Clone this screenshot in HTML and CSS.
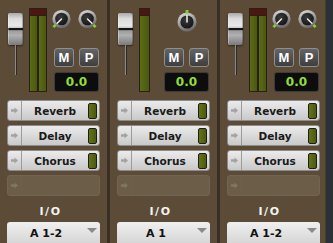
FILE: index.html
```html
<html lang="en">
<head>
  <meta charset="UTF-8" />
  <title>Mixer</title>
  <link rel="stylesheet" href="styles.css">
</head>
<body>
  <svg class="defs" width="0" height="0">
    <defs>
      <linearGradient id="ring" x1="0" y1="0" x2="0.4" y2="1">
        <stop offset="0" stop-color="#e2e2e2"/>
        <stop offset="1" stop-color="#6e6e6e"/>
      </linearGradient>
      <radialGradient id="hub" cx="0.4" cy="0.35" r="0.7">
        <stop offset="0" stop-color="#3a3a3a"/>
        <stop offset="1" stop-color="#141414"/>
      </radialGradient>
      <symbol id="knob" viewBox="0 0 24 24">
        <circle cx="12" cy="12" r="9.5" fill="url(#ring)"/>
        <circle cx="12" cy="12" r="6.6" fill="url(#hub)"/>
      </symbol>
      <symbol id="arrow" viewBox="0 0 9 8">
        <path d="M0 2.5h4.5V0L9 4 4.5 8V5.5H0z"/>
      </symbol>
    </defs>
  </svg>

  <div class="mixer">
    <!-- channel 1 -->
    <div class="strip">
      <div class="top">
        <div class="fader"><div class="cap"></div><div class="track"></div></div>
        <div class="meter-slot">
          <div class="meter"><div class="clip"></div><div class="bars"><span></span><span></span></div></div>
        </div>
        <div class="ctrl">
          <div class="knobs">
            <svg class="knob" width="24" height="24" viewBox="0 0 24 24">
              <use href="#knob"/>
              <g transform="rotate(-135 12 12)">
                <line x1="12" y1="12" x2="12" y2="5.6" class="ptr"/>
                <rect x="10.6" y="0" width="2.8" height="3.2" class="tick"/>
              </g>
            </svg>
            <svg class="knob" width="24" height="24" viewBox="0 0 24 24">
              <use href="#knob"/>
              <g transform="rotate(135 12 12)">
                <line x1="12" y1="12" x2="12" y2="5.6" class="ptr"/>
                <rect x="10.6" y="0" width="2.8" height="3.2" class="tick"/>
              </g>
            </svg>
          </div>
          <div class="mp"><span class="btn">M</span><span class="btn">P</span></div>
          <div class="display">0.0</div>
        </div>
      </div>
      <div class="sends">
        <div class="send"><span class="arrow"><svg width="7" height="7"><use href="#arrow"/></svg></span><span class="name">Reverb</span><span class="level"></span></div>
        <div class="send"><span class="arrow"><svg width="7" height="7"><use href="#arrow"/></svg></span><span class="name">Delay</span><span class="level"></span></div>
        <div class="send"><span class="arrow"><svg width="7" height="7"><use href="#arrow"/></svg></span><span class="name">Chorus</span><span class="level"></span></div>
        <div class="send empty"><span class="arrow"><svg width="7" height="7"><use href="#arrow"/></svg></span></div>
      </div>
      <div class="io-label">I/O</div>
      <div class="io"><span class="io-name">A 1-2</span><span class="tri"></span></div>
    </div>

    <!-- channel 2 -->
    <div class="strip">
      <div class="top">
        <div class="fader"><div class="cap"></div><div class="track"></div></div>
        <div class="meter-slot">
          <div class="meter mono"><div class="clip"></div><div class="bars"><span></span></div></div>
        </div>
        <div class="ctrl">
          <div class="knobs single">
            <svg class="knob" width="24" height="24" viewBox="0 0 24 24">
              <use href="#knob"/>
              <line x1="12" y1="12" x2="12" y2="5.6" class="ptr"/>
              <rect x="10.6" y="0" width="2.8" height="3.6" class="tick"/>
            </svg>
          </div>
          <div class="mp"><span class="btn">M</span><span class="btn">P</span></div>
          <div class="display">0.0</div>
        </div>
      </div>
      <div class="sends">
        <div class="send"><span class="arrow"><svg width="7" height="7"><use href="#arrow"/></svg></span><span class="name">Reverb</span><span class="level"></span></div>
        <div class="send"><span class="arrow"><svg width="7" height="7"><use href="#arrow"/></svg></span><span class="name">Delay</span><span class="level"></span></div>
        <div class="send"><span class="arrow"><svg width="7" height="7"><use href="#arrow"/></svg></span><span class="name">Chorus</span><span class="level"></span></div>
        <div class="send empty"><span class="arrow"><svg width="7" height="7"><use href="#arrow"/></svg></span></div>
      </div>
      <div class="io-label">I/O</div>
      <div class="io"><span class="io-name">A 1</span><span class="tri"></span></div>
    </div>

    <!-- channel 3 -->
    <div class="strip last">
      <div class="top">
        <div class="fader"><div class="cap"></div><div class="track"></div></div>
        <div class="meter-slot">
          <div class="meter"><div class="clip"></div><div class="bars"><span></span><span></span></div></div>
        </div>
        <div class="ctrl">
          <div class="knobs">
            <svg class="knob" width="24" height="24" viewBox="0 0 24 24">
              <use href="#knob"/>
              <g transform="rotate(-135 12 12)">
                <line x1="12" y1="12" x2="12" y2="5.6" class="ptr"/>
                <rect x="10.6" y="0" width="2.8" height="3.2" class="tick"/>
              </g>
            </svg>
            <svg class="knob" width="24" height="24" viewBox="0 0 24 24">
              <use href="#knob"/>
              <g transform="rotate(135 12 12)">
                <line x1="12" y1="12" x2="12" y2="5.6" class="ptr"/>
                <rect x="10.6" y="0" width="2.8" height="3.2" class="tick"/>
              </g>
            </svg>
          </div>
          <div class="mp"><span class="btn">M</span><span class="btn">P</span></div>
          <div class="display">0.0</div>
        </div>
      </div>
      <div class="sends">
        <div class="send"><span class="arrow"><svg width="7" height="7"><use href="#arrow"/></svg></span><span class="name">Reverb</span><span class="level"></span></div>
        <div class="send"><span class="arrow"><svg width="7" height="7"><use href="#arrow"/></svg></span><span class="name">Delay</span><span class="level"></span></div>
        <div class="send"><span class="arrow"><svg width="7" height="7"><use href="#arrow"/></svg></span><span class="name">Chorus</span><span class="level"></span></div>
        <div class="send empty"><span class="arrow"><svg width="7" height="7"><use href="#arrow"/></svg></span></div>
      </div>
      <div class="io-label">I/O</div>
      <div class="io"><span class="io-name">A 1-2</span><span class="tri"></span></div>
    </div>

    <div class="edge"></div>
  </div>
</body>
</html>
```

FILE: styles.css
```css
body {
  margin: 0;
  background: #5c4b37;
  font-family: 'DejaVu Sans', sans-serif;
  overflow: hidden;
}

.defs {
  display: block;
  width: 0;
  height: 0;
}

.mixer {
  display: flex;
  height: 243px;
  overflow: hidden;
}

.strip {
  width: 107px;
  flex: none;
  border-right: 3px solid #3a2f24;
  background: #5c4b37;
}

.strip.last {
  width: 105px;
  border-right: none;
}

.edge {
  flex: 1;
  background: #2a3139;
  border-left: 1px solid #4a3d2e;
}

/* top: fader, meter, knobs */
.top {
  display: flex;
  height: 96px;
  padding-top: 7px;
  box-sizing: border-box;
}

.fader {
  width: 15px;
  margin-left: 8px;
  margin-top: 6px;
  display: flex;
  flex-direction: column;
  align-items: center;
}

.cap {
  width: 15px;
  height: 32px;
  border-radius: 2px;
  background: linear-gradient(to bottom, #a9a9a9 0%, #dcdcdc 18%, #e8e8e8 40%, #c6c6c6 47%, #151515 48%, #151515 53%, #9c9c9c 55%, #b0b0b0 70%, #7a7a7a 100%);
  box-shadow: 0 1px 2px rgba(0, 0, 0, 0.5), inset 1px 0 0 rgba(255, 255, 255, 0.3), inset -1px 0 0 rgba(0, 0, 0, 0.25);
}

.track {
  width: 1px;
  height: 30px;
  background: #2a2a2a;
  border-left: 1px solid #8a8a8a;
}

.meter-slot {
  width: 18px;
  margin-left: 6px;
  margin-top: 1px;
}

.meter {
  width: 18px;
  height: 84px;
  box-sizing: border-box;
  border: 1px solid #2a2116;
  background: #2a2116;
  display: flex;
  flex-direction: column;
}

.meter.mono {
  width: 11px;
}

.clip {
  height: 6px;
  background: #4e1611;
  margin-bottom: 1px;
}

.bars {
  flex: 1;
  display: flex;
  gap: 2px;
}

.bars span {
  flex: 1;
  background: linear-gradient(to right, #5b6c16, #4a5810);
}

.ctrl {
  width: 45px;
  margin-left: 7px;
}

.knobs {
  display: flex;
  gap: 3px;
  margin-left: -4px;
  height: 41px;
  align-items: flex-start;
}

.knobs.single {
  margin-left: 0;
  justify-content: center;
  padding-top: 3px;
  height: 38px;
}

.knob {
  display: block;
}

.ptr {
  stroke: #f2f2f2;
  stroke-width: 1.5;
  stroke-linecap: round;
}

.tick {
  fill: #7dd13a;
}

.mp {
  display: flex;
  gap: 5px;
}

.btn {
  width: 20px;
  height: 19px;
  box-sizing: border-box;
  border: 1px solid #8e8e8e;
  border-radius: 3px;
  background: linear-gradient(to bottom, #646464, #3e3e3e);
  color: #fff;
  font-family: 'Liberation Sans', sans-serif;
  font-weight: bold;
  font-size: 13px;
  line-height: 17px;
  text-align: center;
}

.display {
  margin-top: 5px;
  height: 20px;
  box-sizing: border-box;
  border: 1px solid #3c3c3c;
  border-radius: 3px;
  background: #0d0d0d;
  color: #92de38;
  font-weight: bold;
  font-size: 12px;
  line-height: 18px;
  text-align: center;
}

/* sends */
.sends {
  padding: 4px 0 0 7px;
}

.send {
  width: 93px;
  height: 21px;
  box-sizing: border-box;
  margin-bottom: 4px;
  display: flex;
  align-items: center;
  border: 1px solid #8c8c8c;
  border-radius: 3px;
  background: linear-gradient(to bottom, #ebebeb, #c9c9c9);
  color: #1a1a1a;
  font-weight: bold;
  font-size: 10.5px;
}

.arrow {
  width: 14px;
  height: 100%;
  box-sizing: border-box;
  border-right: 1px solid #9c9c9c;
  display: flex;
  align-items: center;
  justify-content: center;
  fill: #a2a2a2;
}

.name {
  flex: 1;
  text-align: center;
}

.level {
  width: 9px;
  height: 16px;
  box-sizing: border-box;
  margin-right: 2px;
  border: 1px solid #1e1e14;
  border-radius: 2px;
  background: linear-gradient(to right, #627318, #4b5a10);
}

.send.empty {
  background: #6c5d49;
  border-color: #726450;
}

.send.empty .arrow {
  border-right-color: #6f604c;
  fill: #84755f;
}

/* I/O */
.io-label {
  margin-top: 9px;
  color: #f2f2f2;
  font-weight: bold;
  font-size: 11px;
  line-height: 13px;
  letter-spacing: 1.5px;
  text-align: center;
  padding-right: 6px;
}

.io {
  margin: 4px 0 0 7px;
  width: 93px;
  height: 24px;
  box-sizing: border-box;
  padding-top: 5px;
  border-radius: 3px 3px 0 0;
  background: linear-gradient(to bottom, #f0f0f0, #d2d2d2);
  display: flex;
  align-items: flex-start;
  color: #111;
  font-weight: bold;
  font-size: 11px;
  line-height: 13px;
}

.io-name {
  flex: 1;
  text-align: center;
  padding-left: 2px;
}

.tri {
  width: 0;
  height: 0;
  margin: 1px 3px 0 4px;
  border-left: 5px solid transparent;
  border-right: 5px solid transparent;
  border-top: 5px solid #8a8a8a;
}
```
